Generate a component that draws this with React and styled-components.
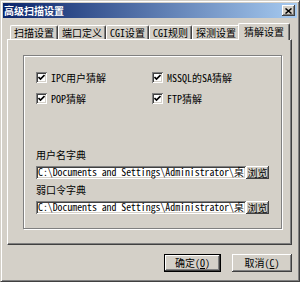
import * as React from "react"
import styled, { createGlobalStyle } from "styled-components"

const face = "#d4d0c8"
const shadow = "#808080"
const dark = "#404040"

const GlobalStyle = createGlobalStyle`
  html, body {
    margin: 0;
    padding: 0;
    background: ${face};
  }
  body {
    font-family: "Noto Sans Mono CJK SC", "Noto Sans CJK SC", sans-serif;
    font-size: 10px;
    color: #000;
  }
`

const Window = styled.div`
  width: 300px;
  height: 282px;
  box-sizing: border-box;
  background: ${face};
  border: 1px solid;
  border-color: ${face} ${dark} ${dark} ${face};
  box-shadow: inset 1px 1px #fff, inset -1px -1px ${shadow};
  padding: 2px;
  display: flex;
  flex-direction: column;
`

const TitleBar = styled.div`
  height: 15px;
  flex: none;
  display: flex;
  align-items: center;
  justify-content: space-between;
  padding-left: 1px;
  background: linear-gradient(to right, #0a246a, #a6caf0);
`

const Title = styled.span`
  color: #fff;
  font-weight: bold;
  font-size: 10px;
  line-height: 12px;
`

const CloseButton = styled.div`
  width: 13px;
  height: 11px;
  margin-right: 2px;
  box-sizing: border-box;
  background: ${face};
  box-shadow: inset -1px -1px ${dark}, inset 1px 1px #fff,
    inset -2px -2px ${shadow};
  display: flex;
  align-items: center;
  justify-content: center;
`

const Content = styled.div`
  display: flex;
  flex-direction: column;
  padding: 6px 5px 0 4px;
`

const TabStrip = styled.div`
  display: flex;
  align-items: flex-end;
  height: 16px;
  padding-left: 3px;
  position: relative;
  z-index: 1;
  margin-bottom: -1px;
`

const Tab = styled.div`
  height: ${(p) => (p.$active ? 17 : 14)}px;
  box-sizing: border-box;
  padding: ${(p) => (p.$active ? "2px 5px 0" : "1px 3px 0")};
  margin: ${(p) => (p.$active ? "0 0 0 -2px" : "0 0 1px")};
  background: ${face};
  border-left: 1px solid #fff;
  border-top: 1px solid #fff;
  border-right: 1px solid ${dark};
  border-top-left-radius: 2px;
  border-top-right-radius: 2px;
  box-shadow: inset -1px 0 ${shadow};
  line-height: 12px;
  white-space: nowrap;
`

const Panel = styled.div`
  height: 206px;
  box-sizing: border-box;
  border: 1px solid;
  border-color: #fff ${dark} ${dark} #fff;
  box-shadow: inset -1px -1px ${shadow};
  padding: 15px 16px 15px 15px;
  display: flex;
`

const GroupBox = styled.div`
  flex: 1;
  border: 1px solid ${shadow};
  box-shadow: inset 1px 1px #fff, 1px 1px #fff;
  padding: 16px 12px 0;
  display: flex;
  flex-direction: column;
`

const CheckGrid = styled.div`
  display: grid;
  grid-template-columns: 116px 1fr;
  row-gap: 10px;
`

const CheckItem = styled.label`
  display: flex;
  align-items: center;
  gap: 4px;
  height: 11px;
  line-height: 12px;
  white-space: nowrap;
`

const Box = styled.span`
  width: 11px;
  height: 11px;
  box-sizing: border-box;
  background: #fff;
  box-shadow: inset 1px 1px ${shadow}, inset -1px -1px #fff,
    inset 2px 2px ${dark}, inset -2px -2px ${face};
  display: flex;
  align-items: center;
  justify-content: center;
  flex: none;
`

const FieldLabel = styled.div`
  line-height: 12px;
  margin-top: ${(p) => p.$top}px;
`

const FieldRow = styled.div`
  display: flex;
  margin-top: 5px;
  height: 13px;
`

const PathField = styled.div`
  width: 210px;
  flex: none;
  box-sizing: border-box;
  background: #fff;
  box-shadow: inset 1px 1px ${shadow}, inset -1px -1px #fff,
    inset 2px 2px ${dark}, inset -2px -2px ${face};
  padding: 0 2px;
  font-size: 9.8px;
  line-height: 13px;
  white-space: nowrap;
  overflow: hidden;
`

const SmallButton = styled.div`
  width: 23px;
  flex: none;
  box-sizing: border-box;
  background: ${face};
  box-shadow: inset -1px -1px ${dark}, inset 1px 1px #fff,
    inset -2px -2px ${shadow};
  line-height: 13px;
  text-align: center;
`

const Footer = styled.div`
  display: flex;
  justify-content: flex-end;
  gap: 11px;
  margin-top: 9px;
`

const Button = styled.div`
  width: ${(p) => p.$w}px;
  height: 18px;
  box-sizing: border-box;
  background: ${face};
  border: ${(p) => (p.$default ? "1px solid #000" : "none")};
  box-shadow: inset -1px -1px ${dark}, inset 1px 1px #fff,
    inset -2px -2px ${shadow};
  display: flex;
  align-items: center;
  justify-content: center;
  line-height: 12px;

  u {
    text-decoration: underline;
  }
`

const Check = () => (
  <svg width="7" height="7" viewBox="0 0 7 7">
    <path d="M0.5 3 L2.5 5 L6.5 1" fill="none" stroke="#000" strokeWidth="1.6" />
  </svg>
)

const tabs = ["扫描设置", "端口定义", "CGI设置", "CGI规则", "探测设置", "猜解设置"]

const checks = ["IPC用户猜解", "MSSQL的SA猜解", "POP猜解", "FTP猜解"]

const path = "C:\\Documents and Settings\\Administrator\\桌"

export default function App() {
  return (
    <>
      <GlobalStyle />
      <Window>
        <TitleBar>
          <Title>高级扫描设置</Title>
          <CloseButton>
            <svg width="7" height="6" viewBox="0 0 7 6">
              <path d="M0.5 0.5 L6.5 5.5 M6.5 0.5 L0.5 5.5" stroke="#000" strokeWidth="1.5" />
            </svg>
          </CloseButton>
        </TitleBar>
        <Content>
          <TabStrip>
            {tabs.map((t, i) => (
              <Tab key={t} $active={i === tabs.length - 1}>
                {t}
              </Tab>
            ))}
          </TabStrip>
          <Panel>
            <GroupBox>
              <CheckGrid>
                {checks.map((c) => (
                  <CheckItem key={c}>
                    <Box>
                      <Check />
                    </Box>
                    {c}
                  </CheckItem>
                ))}
              </CheckGrid>
              <FieldLabel $top={45}>用户名字典</FieldLabel>
              <FieldRow>
                <PathField>{path}</PathField>
                <SmallButton>浏览</SmallButton>
              </FieldRow>
              <FieldLabel $top={5}>弱口令字典</FieldLabel>
              <FieldRow>
                <PathField>{path}</PathField>
                <SmallButton>浏览</SmallButton>
              </FieldRow>
            </GroupBox>
          </Panel>
          <Footer>
            <Button $w={57} $default>
              确定(<u>O</u>)
            </Button>
            <Button $w={60}>
              取消(<u>C</u>)
            </Button>
          </Footer>
        </Content>
      </Window>
    </>
  )
}
